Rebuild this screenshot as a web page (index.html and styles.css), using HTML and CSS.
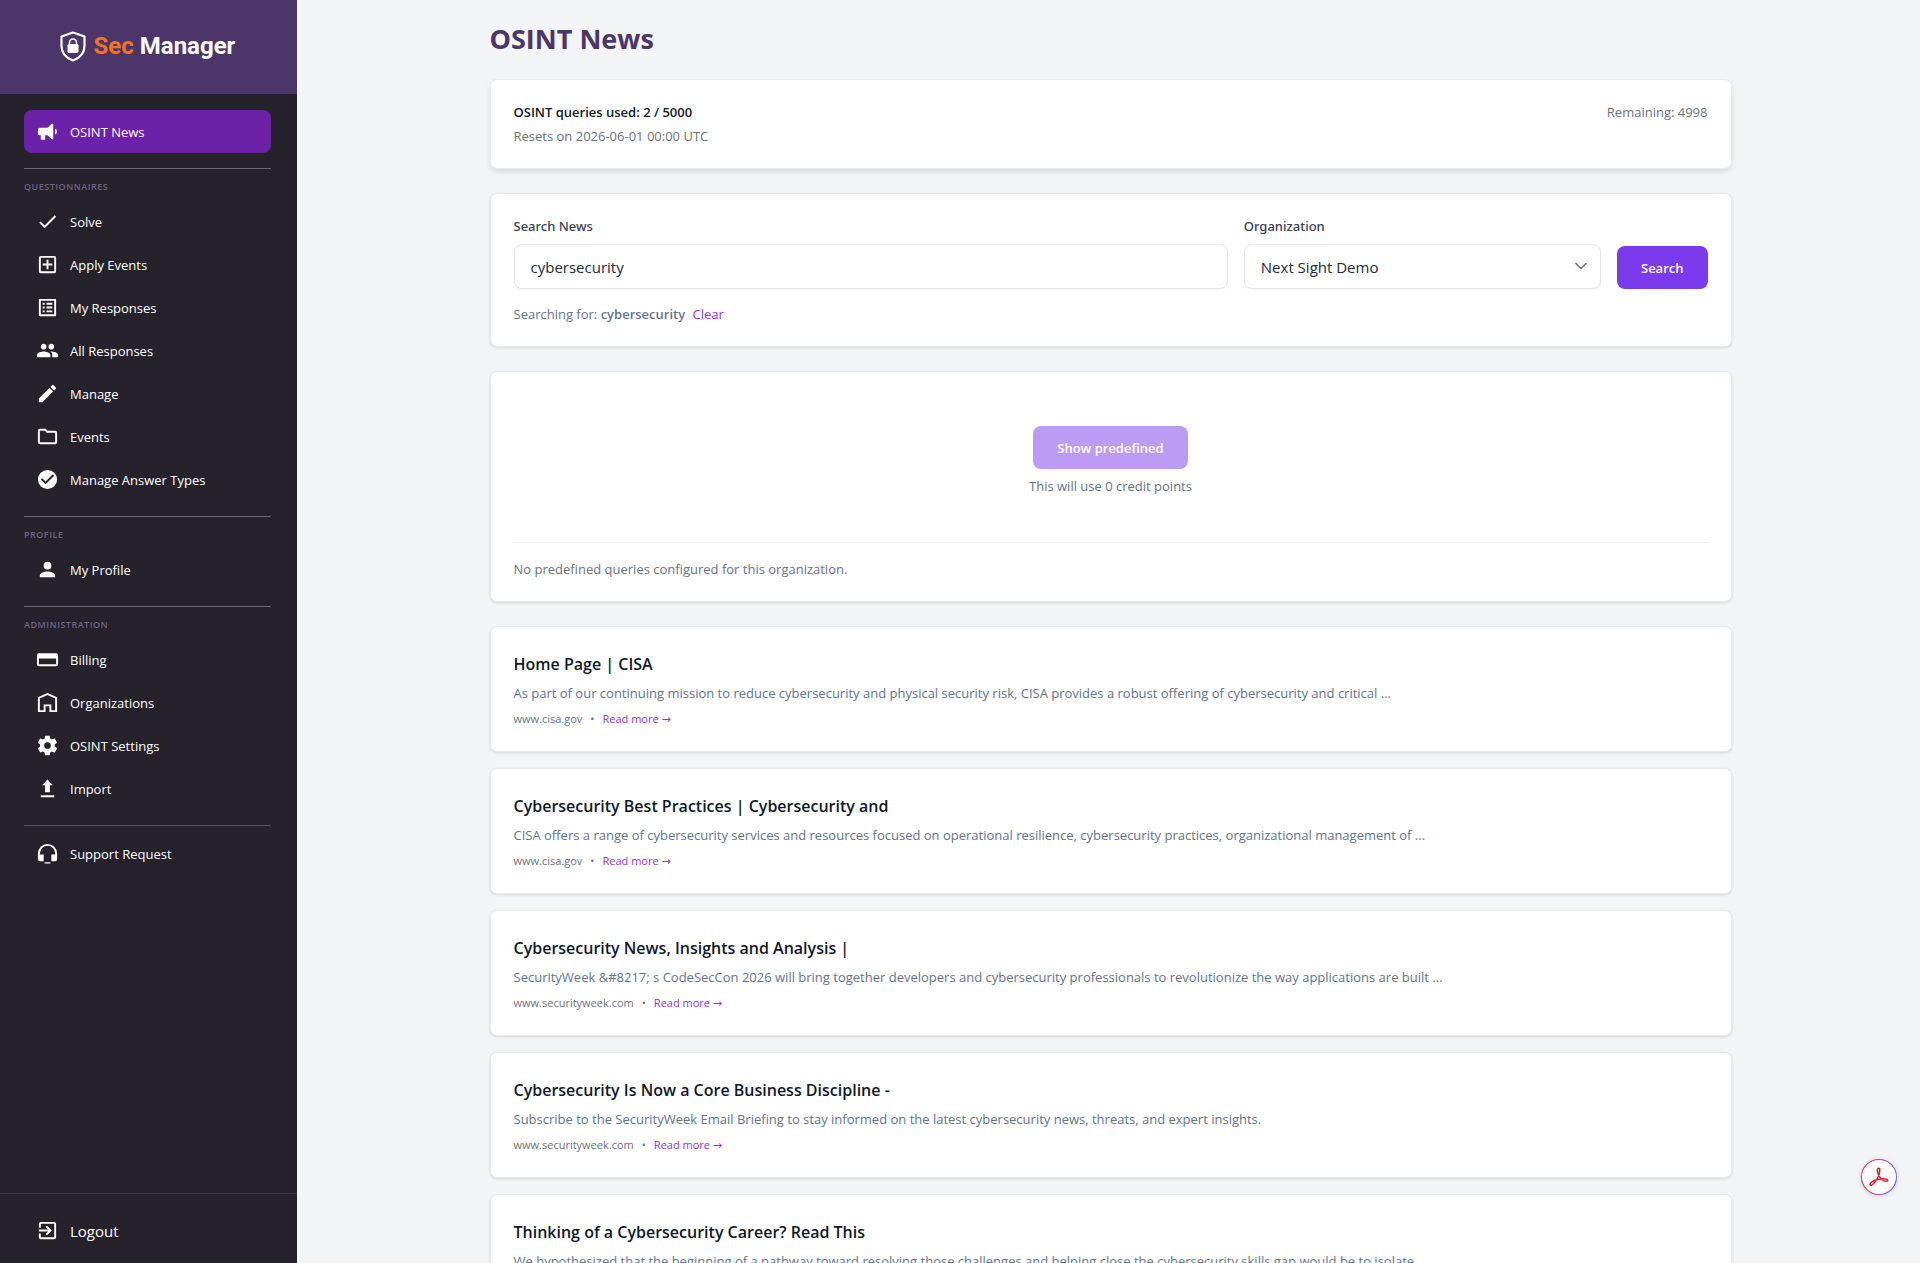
FILE: index.html
```html
<!DOCTYPE html>
<html lang="en">
<head>
    <meta charset="UTF-8">
    <meta name="viewport" content="width=device-width, initial-scale=1.0">
    <title>OSINT News - Sec Manager</title>
    <link rel="stylesheet" href="styles.css">
</head>
<body>
    <aside class="sidebar">
        <a class="brand" href="#">
            <svg class="brand-icon" viewBox="0 0 26 31" aria-hidden="true">
                <path d="M13 1.500 24.500 5.500V15c0 7-4.500 12-11.500 14.500C6 27 1.500 22 1.500 15V5.500z" fill="none" stroke="#fff" stroke-width="2.200" stroke-linejoin="round"/>
                <path d="M9.500 14v-2.500a3.500 3.500 0 0 1 7 0V14" fill="none" stroke="#fff" stroke-width="1.600"/>
                <rect x="7.500" y="13" width="11" height="9" rx="1.500" fill="#fff"/>
            </svg>
            <span class="brand-name"><span class="brand-accent">Sec</span> Manager</span>
        </a>

        <nav class="nav">
            <a class="nav-item active" href="#">
                <svg viewBox="0 0 24 24"><path d="M20 9v6c1.300-.5 2-1.700 2-3s-.7-2.500-2-3zM18 4h-1.500L12 8H4a2 2 0 0 0-2 2v4a2 2 0 0 0 2 2h1v4.500h4.500V16H12l4.500 4H18z"/></svg>
                OSINT News
            </a>

            <div class="nav-group">
                <h2>Questionnaires</h2>
                <a class="nav-item" href="#">
                    <svg viewBox="0 0 24 24"><path d="M9 16.170 4.830 12l-1.420 1.410L9 19 21 7l-1.410-1.410z"/></svg>
                    Solve
                </a>
                <a class="nav-item" href="#">
                    <svg viewBox="0 0 24 24"><path d="M19 3H5a2 2 0 0 0-2 2v14a2 2 0 0 0 2 2h14a2 2 0 0 0 2-2V5a2 2 0 0 0-2-2zm0 16H5V5h14v14zM11 17h2v-4h4v-2h-4V7h-2v4H7v2h4z"/></svg>
                    Apply Events
                </a>
                <a class="nav-item" href="#">
                    <svg viewBox="0 0 24 24"><path d="M19 5v14H5V5h14m1.100-2H3.900c-.5 0-.9.4-.9.9v16.200c0 .4.4.9.9.9h16.200c.4 0 .9-.5.9-.9V3.900c0-.5-.5-.9-.9-.9zM11 7h6v2h-6V7zm0 4h6v2h-6v-2zm0 4h6v2h-6zM7 7h2v2H7zm0 4h2v2H7zm0 4h2v2H7z"/></svg>
                    My Responses
                </a>
                <a class="nav-item" href="#">
                    <svg viewBox="0 0 24 24"><path d="M16 11c1.660 0 2.990-1.340 2.990-3S17.660 5 16 5s-3 1.340-3 3 1.340 3 3 3zm-8 0c1.660 0 2.990-1.340 2.990-3S9.660 5 8 5 5 6.340 5 8s1.340 3 3 3zm0 2c-2.330 0-7 1.170-7 3.500V19h14v-2.500c0-2.330-4.670-3.500-7-3.500zm8 0c-.29 0-.62.02-.97.05 1.160.84 1.970 1.970 1.970 3.450V19h6v-2.500c0-2.330-4.670-3.500-7-3.500z"/></svg>
                    All Responses
                </a>
                <a class="nav-item" href="#">
                    <svg viewBox="0 0 24 24"><path d="M3 17.250V21h3.750L17.810 9.940l-3.750-3.750L3 17.250zM20.710 7.040a1 1 0 0 0 0-1.410l-2.340-2.340a1 1 0 0 0-1.410 0l-1.830 1.830 3.750 3.750 1.830-1.830z"/></svg>
                    Manage
                </a>
                <a class="nav-item" href="#">
                    <svg viewBox="0 0 24 24"><path d="m9.170 6 2 2H20v10H4V6h5.170M10 4H4a2 2 0 0 0-2 2v12a2 2 0 0 0 2 2h16a2 2 0 0 0 2-2V8a2 2 0 0 0-2-2h-8l-2-2z"/></svg>
                    Events
                </a>
                <a class="nav-item" href="#">
                    <svg viewBox="0 0 24 24"><path d="M12 2a10 10 0 1 0 0 20 10 10 0 0 0 0-20zm-2 15-5-5 1.410-1.410L10 14.170l7.590-7.590L19 8l-9 9z"/></svg>
                    Manage Answer Types
                </a>
            </div>

            <div class="nav-group">
                <h2>Profile</h2>
                <a class="nav-item" href="#">
                    <svg viewBox="0 0 24 24"><path d="M12 12a4 4 0 1 0 0-8 4 4 0 0 0 0 8zm0 2c-2.670 0-8 1.340-8 4v2h16v-2c0-2.660-5.330-4-8-4z"/></svg>
                    My Profile
                </a>
            </div>

            <div class="nav-group">
                <h2>Administration</h2>
                <a class="nav-item" href="#">
                    <svg viewBox="0 0 24 24"><path d="M21 5.500H3a2 2 0 0 0-2 2v9.500a2 2 0 0 0 2 2h18a2 2 0 0 0 2-2V7.500a2 2 0 0 0-2-2zM21 17H3v-6h18z"/></svg>
                    Billing
                </a>
                <a class="nav-item" href="#">
                    <svg viewBox="0 0 24 24"><path d="M12 2 2 6.500V22h8v-6h4v6h8V6.500L12 2zm8 18h-4v-6H8v6H4V7.800l8-3.600 8 3.600V20z"/></svg>
                    Organizations
                </a>
                <a class="nav-item" href="#">
                    <svg viewBox="0 0 24 24"><path d="M19.500 13c.1-.7.1-1.300 0-2l2.200-1.700c.2-.2.3-.5.1-.7l-2.100-3.600c-.1-.2-.4-.3-.7-.2l-2.500 1c-.5-.4-1.100-.7-1.700-1l-.4-2.600c0-.2-.3-.4-.5-.4h-4c-.2 0-.5.200-.5.4L9 4.800c-.6.3-1.200.6-1.700 1l-2.500-1c-.2-.1-.5 0-.6.2L2.100 8.600c-.1.2-.1.5.1.7L4.300 11c-.1.700-.1 1.300 0 2l-2.100 1.700c-.2.200-.3.500-.1.700l2.100 3.600c.1.200.4.300.6.200l2.500-1c.5.400 1.100.7 1.700 1l.4 2.600c0 .2.300.4.500.4h4c.2 0 .5-.2.500-.4l.4-2.600c.6-.3 1.200-.6 1.700-1l2.500 1c.2.100.5 0 .7-.2l2.100-3.600c.1-.2.1-.5-.1-.7zM12 15.500a3.500 3.500 0 1 1 0-7 3.500 3.500 0 0 1 0 7z"/></svg>
                    OSINT Settings
                </a>
                <a class="nav-item" href="#">
                    <svg viewBox="0 0 24 24"><path d="M5 21h14v-2H5v2zM9.500 16h5V8.500H17.500L12 2.500 6.500 8.500h3z"/></svg>
                    Import
                </a>
            </div>

            <div class="nav-group nav-support">
                <a class="nav-item" href="#">
                    <svg viewBox="0 0 24 24"><path d="M12 2A10 10 0 0 0 2 12v6a2 2 0 0 0 2 2h4v-7H4v-1a8 8 0 0 1 16 0v1h-4v7h4a2 2 0 0 0 2-2v-6A10 10 0 0 0 12 2zM9 21h6v1.500H9z"/></svg>
                    Support Request
                </a>
            </div>
        </nav>

        <div class="sidebar-footer">
            <a class="nav-item logout" href="#">
                <svg viewBox="0 0 24 24"><path d="M10.090 15.590 11.500 17l5-5-5-5-1.410 1.410L12.670 11H3v2h9.670l-2.580 2.590zM19 3H5a2 2 0 0 0-2 2v4h2V5h14v14H5v-4H3v4a2 2 0 0 0 2 2h14a2 2 0 0 0 2-2V5a2 2 0 0 0-2-2z"/></svg>
                Logout
            </a>
        </div>
    </aside>

    <main class="main">
        <div class="content">
            <h1>OSINT News</h1>

            <section class="card usage">
                <div>
                    <p class="usage-title">OSINT queries used: 2 / 5000</p>
                    <p class="muted">Resets on 2026-06-01 00:00 UTC</p>
                </div>
                <p class="muted">Remaining: 4998</p>
            </section>

            <section class="card">
                <form class="search-form">
                    <div class="field">
                        <label for="query">Search News</label>
                        <input type="text" id="query" name="query" value="cybersecurity">
                    </div>
                    <div class="field">
                        <label for="organization">Organization</label>
                        <div class="select-wrap">
                            <select id="organization" name="organization">
                                <option>Next Sight Demo</option>
                            </select>
                            <svg class="chevron" viewBox="0 0 12 8" aria-hidden="true"><path d="M1 1.500l5 5 5-5" fill="none" stroke="#6b7280" stroke-width="1.600" stroke-linecap="round" stroke-linejoin="round"/></svg>
                        </div>
                    </div>
                    <button type="submit" class="btn">Search</button>
                </form>
                <p class="search-status">Searching for: <strong>cybersecurity</strong> <a href="#">Clear</a></p>
            </section>

            <section class="card">
                <div class="predefined">
                    <button type="button" class="btn" disabled>Show predefined</button>
                    <p class="muted">This will use 0 credit points</p>
                </div>
                <p class="predefined-empty">No predefined queries configured for this organization.</p>
            </section>

            <div class="results">
                <article class="card result">
                    <h3>Home Page | CISA</h3>
                    <p class="excerpt">As part of our continuing mission to reduce cybersecurity and physical security risk, CISA provides a robust offering of cybersecurity and critical ...</p>
                    <p class="source"><span>www.cisa.gov</span><span>•</span><a href="#">Read more <span class="arrow">→</span></a></p>
                </article>
                <article class="card result">
                    <h3>Cybersecurity Best Practices | Cybersecurity and</h3>
                    <p class="excerpt">CISA offers a range of cybersecurity services and resources focused on operational resilience, cybersecurity practices, organizational management of ...</p>
                    <p class="source"><span>www.cisa.gov</span><span>•</span><a href="#">Read more <span class="arrow">→</span></a></p>
                </article>
                <article class="card result">
                    <h3>Cybersecurity News, Insights and Analysis |</h3>
                    <p class="excerpt">SecurityWeek &amp;#8217; s CodeSecCon 2026 will bring together developers and cybersecurity professionals to revolutionize the way applications are built ...</p>
                    <p class="source"><span>www.securityweek.com</span><span>•</span><a href="#">Read more <span class="arrow">→</span></a></p>
                </article>
                <article class="card result">
                    <h3>Cybersecurity Is Now a Core Business Discipline -</h3>
                    <p class="excerpt">Subscribe to the SecurityWeek Email Briefing to stay informed on the latest cybersecurity news, threats, and expert insights.</p>
                    <p class="source"><span>www.securityweek.com</span><span>•</span><a href="#">Read more <span class="arrow">→</span></a></p>
                </article>
                <article class="card result">
                    <h3>Thinking of a Cybersecurity Career? Read This</h3>
                    <p class="excerpt">We hypothesized that the beginning of a pathway toward resolving those challenges and helping close the cybersecurity skills gap would be to isolate</p>
                </article>
            </div>
        </div>
    </main>

    <button type="button" class="pdf-button" aria-label="Open in Acrobat">
        <svg viewBox="0 0 20 20" aria-hidden="true"><path d="M1.200 17.800C.3 16 4 13.500 8.500 12.500c4.500-1 9.500-1 10.200.5.600 1.700-3.200 1.800-5.700-.5C10 10 8 5 8.500 2.500 9 .5 11 1 10.800 3.500 10.500 7.500 8 12.500 5 16c-1.800 2.200-3.300 2.800-3.800 1.800z" fill="none" stroke="#d3222a" stroke-width="1.500" stroke-linejoin="round"/></svg>
    </button>
</body>
</html>
```
FILE: styles.css
```css
* {
    box-sizing: border-box;
}
body {
    margin: 0;
    display: flex;
    height: 100vh;
    font-family: "Open Sans", "Liberation Sans", sans-serif;
    font-size: 13px;
    line-height: 20px;
    color: #1f2937;
    background: #f3f4f6;
}
h1, h2, h3, p {
    margin: 0;
}
a {
    color: #9333ea;
    text-decoration: none;
}

/* Sidebar */
.sidebar {
    width: 297px;
    flex-shrink: 0;
    display: flex;
    flex-direction: column;
    background: #26222c;
}
.brand {
    height: 94px;
    flex-shrink: 0;
    display: flex;
    align-items: center;
    justify-content: center;
    gap: 8px;
    padding: 0 2px 2px 0;
    background: #4c3569;
}
.brand-icon {
    width: 26px;
    height: 31px;
}
.brand-name {
    font-family: Roboto, sans-serif;
    font-size: 24px;
    font-weight: 700;
    line-height: 32px;
    color: #fff;
}
.brand-accent {
    color: #f07328;
}
.nav {
    flex: 1;
    padding: 16px 26px 0 24px;
    overflow: hidden;
}
.nav-item {
    display: flex;
    align-items: center;
    gap: 11px;
    height: 43px;
    padding: 0 12px;
    border-radius: 8px;
    color: #fff;
}
.nav-item svg {
    width: 23px;
    height: 23px;
    fill: #fff;
}
.nav-item.active {
    margin-bottom: 15px;
    background: #6b21a8;
}
.nav-group {
    padding-bottom: 15px;
    border-top: 1px solid #6b6775;
}
.nav-group h2 {
    padding: 11px 0 6px;
    font-size: 9px;
    font-weight: 600;
    line-height: 14px;
    letter-spacing: 0.5px;
    text-transform: uppercase;
    color: #6f6380;
}
.nav-support {
    padding-top: 6px;
    border-color: #57536a;
}
.sidebar-footer {
    padding: 15px 24px 11px;
    border-top: 1px solid #3b3742;
}
.logout {
    font-size: 15px;
}

/* Main column */
.main {
    flex: 1;
    padding: 19px 24px 0 28px;
    overflow-y: auto;
    scrollbar-width: none;
}
.content {
    max-width: 1242px;
    margin: 0 auto;
}
h1 {
    margin-bottom: 20px;
    font-size: 27px;
    font-weight: 700;
    line-height: 40px;
    color: #4c3569;
}
.card {
    margin-bottom: 24px;
    padding: 22px 23px;
    background: #fff;
    border: 1px solid #e8e9ec;
    border-radius: 7px;
    box-shadow: 0 1px 3px rgba(0, 0, 0, 0.12);
}
.muted {
    color: #6b7280;
}
.usage {
    display: flex;
    justify-content: space-between;
    box-shadow: 0 3px 5px rgba(0, 0, 0, 0.1);
}
.usage-title {
    margin-bottom: 4px;
    font-weight: 600;
    color: #111827;
}

/* Search form */
.search-form {
    display: grid;
    grid-template-columns: 2fr 1fr auto;
    align-items: end;
    gap: 16px;
}
label {
    display: block;
    margin-bottom: 8px;
    font-family: "Noto Sans", sans-serif;
    font-weight: 500;
    color: #374151;
}
input, select {
    display: block;
    width: 100%;
    height: 45px;
    padding: 0 16px;
    font-family: inherit;
    font-size: 15px;
    color: #1f2937;
    background: #fff;
    border: 1px solid #e5e7eb;
    border-radius: 8px;
    box-shadow: 0 1px 2px rgba(0, 0, 0, 0.05);
}
select {
    appearance: none;
}
.select-wrap {
    position: relative;
}
.chevron {
    position: absolute;
    top: 18px;
    right: 14px;
    width: 12px;
    height: 8px;
    pointer-events: none;
}
.btn {
    height: 43px;
    padding: 0 24px;
    font-family: inherit;
    font-size: 13px;
    font-weight: 600;
    color: #fff;
    background: #7c3aed;
    border: none;
    border-radius: 8px;
    cursor: pointer;
}
.btn:disabled {
    opacity: 0.5;
    cursor: default;
}
.search-status {
    margin-top: 15px;
    color: #64748b;
}
.search-status strong {
    font-weight: 600;
}
.search-status a {
    margin-left: 4px;
}

/* Predefined queries */
.predefined {
    display: flex;
    flex-direction: column;
    align-items: center;
    gap: 7px;
    padding: 32px 0 46px;
}
.predefined-empty {
    padding-top: 16px;
    color: #6b7280;
    border-top: 1px solid #f0f1f4;
}

/* Results */
.result {
    margin-bottom: 16px;
    padding: 24px 23px 21px;
}
.result h3 {
    margin-bottom: 6px;
    font-size: 16px;
    font-weight: 600;
    line-height: 26px;
    color: #111827;
}
.excerpt {
    margin-bottom: 6px;
    color: #64748b;
}
.source {
    display: flex;
    gap: 8px;
    font-size: 11px;
    color: #6b7280;
}
.arrow {
    font-family: "DejaVu Sans", sans-serif;
}

.pdf-button {
    position: fixed;
    right: 23px;
    bottom: 68px;
    display: flex;
    align-items: center;
    justify-content: center;
    width: 36px;
    height: 36px;
    padding: 0;
    border: 1px solid transparent;
    border-radius: 50%;
    background: linear-gradient(#fff, #fff) padding-box, linear-gradient(90deg, #d8344e, #6d5bea) border-box;
    box-shadow: 0 1px 5px rgba(0, 0, 0, 0.15);
}
.pdf-button svg {
    width: 20px;
    height: 20px;
}
```
